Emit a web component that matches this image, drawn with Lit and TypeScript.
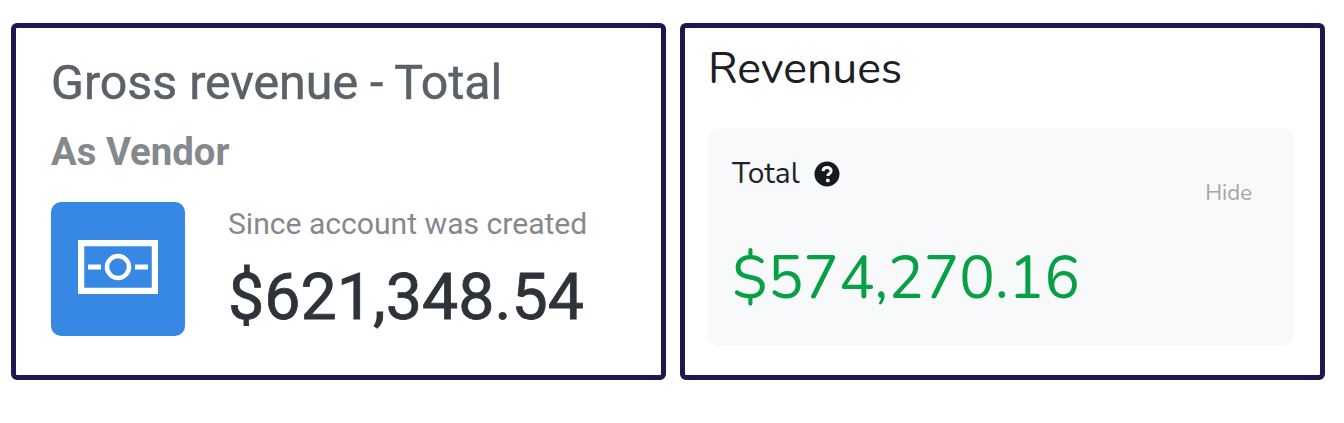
import { LitElement, html, css } from "lit";
import { customElement } from "lit/decorators.js";

@customElement("app-root")
export class AppRoot extends LitElement {
  static styles = css`
    :host { display: block; width: 1344px; height: 423px; background: #fff; overflow: hidden; }
    .wrap { display: flex; gap: 14px; padding: 23px 19px 0 11px; box-sizing: border-box; }
    .card { box-sizing: border-box; height: 357px; border: 5px solid #211654; border-radius: 6px; background: #fff; }
    .left { width: 655px; padding: 24px 35px 0; font-family: Roboto, sans-serif; }
    .right { width: 645px; padding: 13px 26px 0 23px; font-family: "Nunito", Lato, sans-serif; }
    .title { font-size: 48.3px; line-height: 62px; color: #5a6167; -webkit-text-stroke: 0.5px #5a6167; }
    .sub { font-size: 38.3px; line-height: 44px; font-weight: 700; color: #84898d; margin-top: 16px; }
    .row { display: flex; gap: 43px; margin-top: 28px; }
    .icon { width: 134px; height: 134px; border-radius: 10px; background: #3787e5; display: flex; align-items: center; justify-content: center; flex: none; padding-bottom: 4px; box-sizing: border-box; }
    .since { font-size: 30.1px; line-height: 38px; color: #85898d; margin-top: 3px; }
    .amount { font-size: 64.5px; line-height: 74px; color: #2d3339; margin-top: 17px; -webkit-text-stroke: 0.8px #2d3339; }
    .heading { font-size: 44.5px; line-height: 56px; color: #1c2024; }
    .panel { background: #f8f9fb; border-radius: 12px; height: 218px; margin-top: 31px; padding: 12px 42px 0 24px; box-sizing: border-box; }
    .head { display: flex; justify-content: space-between; }
    .label { display: flex; align-items: center; gap: 14px; font-size: 30px; line-height: 42px; color: #1f2327; }
    .hide { font-size: 22.2px; line-height: 30px; color: #a4a6a9; margin-top: 38px; }
    .value { font-size: 59.4px; line-height: 80px; color: #07a045; margin-top: 31px; }
  `;

  render() {
    return html`<div class="wrap">
      <section class="card left">
        <div class="title">Gross revenue - Total</div>
        <div class="sub">As Vendor</div>
        <div class="row">
          <div class="icon">
            <svg width="80" height="54" viewBox="0 0 80 54" fill="none" stroke="#fff">
              <rect x="3" y="3" width="74" height="48" stroke-width="6.5"/>
              <circle cx="40" cy="27" r="11" stroke-width="4.5"/>
              <path d="M10 27h13M57 27h13" stroke-width="5"/>
            </svg>
          </div>
          <div>
            <div class="since">Since account was created</div>
            <div class="amount">$621,348.54</div>
          </div>
        </div>
      </section>
      <section class="card right">
        <div class="heading">Revenues</div>
        <div class="panel">
          <div class="head">
            <div class="label">Total
              <svg width="26" height="26" viewBox="0 0 26 26">
                <circle cx="13" cy="13" r="12.5" fill="#16191d"/>
                <path d="M9 10.2c.2-2.4 1.9-3.7 4.1-3.7 2.3 0 4 1.4 4 3.4 0 1.5-.8 2.3-2 3-1 .6-1.2 1-1.2 2.1" fill="none" stroke="#fff" stroke-width="3"/>
                <circle cx="13.8" cy="19.4" r="1.9" fill="#fff"/>
              </svg>
            </div>
            <div class="hide">Hide</div>
          </div>
          <div class="value">$574,270.16</div>
        </div>
      </section>
    </div>`;
  }
}
